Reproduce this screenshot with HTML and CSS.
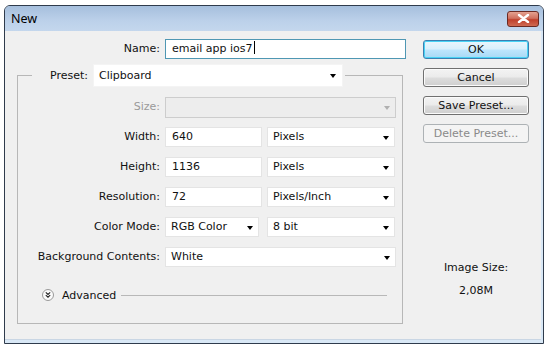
FILE: index.html
```html
<!DOCTYPE html>
<html lang="en">
<head>
  <meta charset="UTF-8" />
  <title>New</title>
  <link rel="stylesheet" href="styles.css">
</head>
<body>

  <div class="window">
    <!-- title bar -->
    <div class="titlebar">
      <span class="title">New</span>
      <button class="close" title="Close">
        <svg width="13" height="9" viewBox="0 0 13 9">
          <path d="M2 1 L11 8 M11 1 L2 8" stroke="#fff" stroke-width="2.4" stroke-linecap="round" />
        </svg>
      </button>
    </div>

    <div class="body">
      <div class="form">
        <div class="name-row">
          <span class="lbl">Name:</span>
          <div class="field name-field">email app ios7<span class="caret"></span></div>
        </div>

        <fieldset class="group">
          <legend class="preset">
            <span class="lbl preset-lbl">Preset:</span>
            <div class="select preset-select">Clipboard</div>
          </legend>

          <div class="grid">
            <span class="lbl muted">Size:</span>
            <div class="select disabled span2"></div>

            <span class="lbl">Width:</span>
            <div class="field">640</div>
            <div class="select">Pixels</div>

            <span class="lbl">Height:</span>
            <div class="field">1136</div>
            <div class="select">Pixels</div>

            <span class="lbl">Resolution:</span>
            <div class="field">72</div>
            <div class="select">Pixels/Inch</div>

            <span class="lbl">Color Mode:</span>
            <div class="select narrow">RGB Color</div>
            <div class="select">8 bit</div>

            <span class="lbl">Background Contents:</span>
            <div class="select span2">White</div>
          </div>

          <div class="advanced">
            <span class="adv-icon">
              <svg width="12" height="12" viewBox="0 0 12 12">
                <circle cx="6" cy="6" r="5.5" fill="#fafafa" stroke="#9a9a9a" />
                <path d="M3.8 3.4 L6 5.4 L8.2 3.4 M3.8 6.2 L6 8.2 L8.2 6.2" fill="none" stroke="#222" stroke-width="1.1" />
              </svg>
            </span>
            <span class="adv-text">Advanced</span>
            <span class="adv-line"></span>
          </div>
        </fieldset>
      </div>

      <div class="side">
        <button class="btn default">OK</button>
        <button class="btn">Cancel</button>
        <button class="btn">Save Preset...</button>
        <button class="btn" disabled>Delete Preset...</button>

        <div class="image-size">
          <p>Image Size:</p>
          <p>2,08M</p>
        </div>
      </div>
    </div>
  </div>

</body>
</html>
```

FILE: styles.css
```css
html, body {
  margin: 0;
  padding: 0;
  background: #fff;
  font-family: "DejaVu Sans", Verdana, sans-serif;
  font-size: 11px;
  color: #111;
}

body {
  padding: 5px 0 0 4px;
}

.window {
  width: 536px;
  height: 334px;
  border: 1px solid #2f3b4c;
  border-radius: 6px 6px 0 0;
  background: #d9e8f6;
  display: flex;
  flex-direction: column;
  padding: 0 2px 3px 0;
  box-sizing: content-box;
  overflow: hidden;
}

.titlebar {
  height: 25px;
  flex: none;
  display: flex;
  align-items: center;
  justify-content: space-between;
  padding: 0 4px 0 6px;
  background: linear-gradient(#a6bfdd, #bcd1ea 60%, #c4d7ed);
  margin-right: -2px;
}

.title {
  font-family: "Noto Sans", "DejaVu Sans", sans-serif;
  font-size: 12.5px;
  color: #000;
  margin-top: -1px;
}

.close {
  width: 32px;
  height: 16px;
  padding: 0;
  border: 1px solid #6b2a23;
  border-radius: 3px;
  background: linear-gradient(#e4a190, #d0705e 45%, #c0402c 55%, #cf6a52);
  display: flex;
  align-items: center;
  justify-content: center;
}

.body {
  flex: 1;
  display: flex;
  background: #f0f0f0;
  border-bottom: 1px solid #c9d6e4;
  padding: 8px 0 0 12px;
}

.form {
  width: 389px;
  display: flex;
  flex-direction: column;
}

.lbl {
  text-align: right;
  white-space: nowrap;
  line-height: 20px;
}

.muted {
  color: #9a9a9a;
}

.name-row {
  display: grid;
  grid-template-columns: 143px 241px;
  column-gap: 5px;
  height: 20px;
}

.field,
.select {
  position: relative;
  height: 20px;
  line-height: 18px;
  box-sizing: border-box;
  background: #fff;
  border: 1px solid #e4e4e4;
  padding-left: 6px;
  white-space: nowrap;
}

.select {
  padding-left: 5px;
}

.select::after {
  content: "";
  position: absolute;
  right: 5px;
  top: 8px;
  border-left: 3.5px solid transparent;
  border-right: 3.5px solid transparent;
  border-top: 4px solid #000;
}

.name-field {
  border-color: #4f97b3;
}

.caret {
  display: inline-block;
  width: 1px;
  height: 13px;
  margin-left: 1px;
  background: #000;
  vertical-align: -2px;
}

.group {
  margin: 5px 0 0 0;
  padding: 10px 6px 21px 0;
  border: 1px solid #b7b7b7;
  min-width: 0;
  width: 378px;
  box-sizing: content-box;
}

.preset {
  display: flex;
  align-items: center;
  margin-left: 14px;
  padding: 0 2px 0 0;
  height: 23px;
}

.preset-lbl {
  width: 56px;
  margin-right: 5px;
}

.preset-select {
  width: 250px;
  height: 23px;
  line-height: 21px;
  border-color: #f4f4f4;
}

.preset-select::after {
  top: 9px;
  right: 6px;
}

.grid {
  display: grid;
  grid-template-columns: 142px 97px 128px;
  grid-auto-rows: 20px;
  column-gap: 5px;
  row-gap: 10px;
}

.grid .narrow {
  width: 94px;
}

.span2 {
  grid-column: span 2;
  width: 231px;
}

.disabled {
  background: #ededed;
  border-color: #cdcdcd;
  height: 21px;
}

.disabled::after {
  border-top-color: #b0b0b0;
}

.advanced {
  display: flex;
  align-items: center;
  margin: 21px 0 0 24px;
  height: 14px;
}

.adv-icon {
  display: flex;
  width: 12px;
  height: 12px;
}

.adv-text {
  margin-left: 8px;
  font-size: 11px;
}

.adv-line {
  flex: 1;
  height: 1px;
  background: #b8b8b8;
  margin: 0 9px 0 5px;
}

.side {
  display: flex;
  flex-direction: column;
  align-items: center;
  width: 106px;
  margin-left: 17px;
  padding-top: 1px;
}

.btn {
  width: 106px;
  height: 19px;
  margin-bottom: 9px;
  padding: 0;
  font-family: "DejaVu Sans", Verdana, sans-serif;
  font-size: 11px;
  color: #111;
  border: 1px solid #707070;
  border-radius: 3px;
  background: linear-gradient(#f3f3f3, #ebebeb 48%, #dddddd 52%, #cfcfcf);
  box-shadow: inset 0 0 0 1px #fbfbfb;
}

.btn.default {
  border-color: #3c7fb1;
  background: linear-gradient(#eaf6fd, #d9f0fc 48%, #bee6fd 52%, #a7d9f5);
  box-shadow: inset 0 0 0 1px #48d3f5;
}

.btn:disabled {
  color: #8a8a8a;
  border-color: #adb2b5;
  background: #f4f4f4;
  box-shadow: none;
}

.image-size {
  margin-top: 109px;
  text-align: center;
}

.image-size p {
  margin: 0 0 9px 0;
  line-height: 14px;
}
```
